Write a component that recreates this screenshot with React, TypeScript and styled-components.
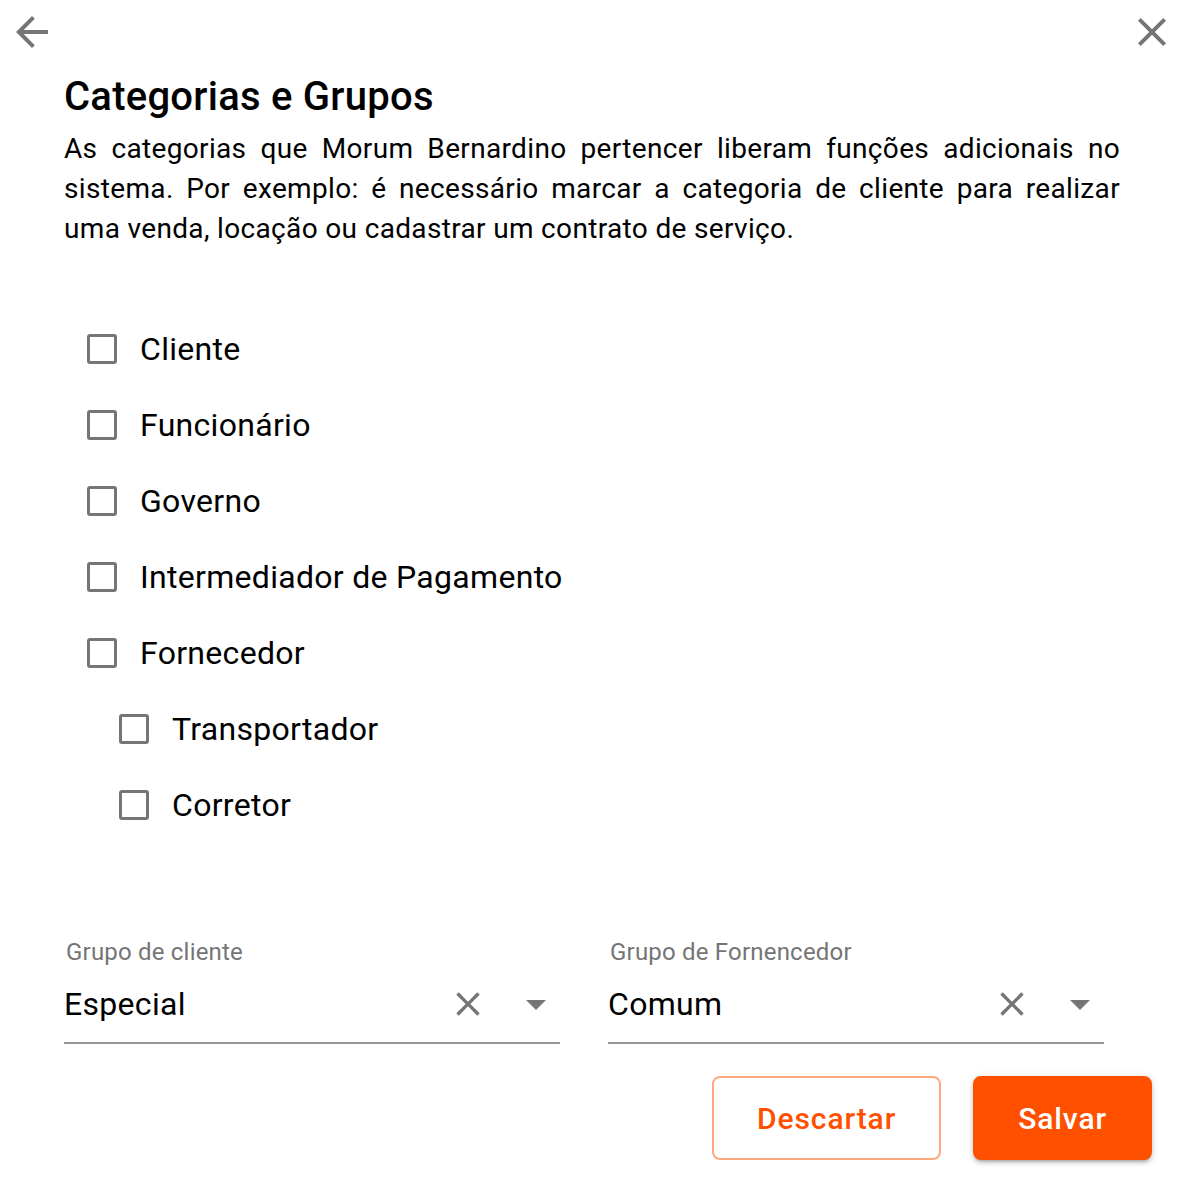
import React, { useState } from 'react';
import styled, { createGlobalStyle } from 'styled-components';

const GlobalStyle = createGlobalStyle`
  html, body {
    margin: 0;
    padding: 0;
    background: #ffffff;
  }
  body {
    font-family: Roboto, "Liberation Sans", Arial, sans-serif;
    color: #000000;
  }
`;

const ORANGE = '#ff5000';

const Page = styled.div`
  width: 1184px;
  min-height: 1192px;
  box-sizing: border-box;
  padding: 0 64px;
`;

const TopBar = styled.div`
  display: flex;
  justify-content: space-between;
  align-items: center;
  height: 64px;
  margin: 0 -56px;
`;

const IconButton = styled.button`
  width: 48px;
  height: 48px;
  padding: 0;
  border: none;
  background: transparent;
  display: flex;
  align-items: center;
  justify-content: center;
  cursor: pointer;
  color: #757575;
`;

const Title = styled.h1`
  margin: 9px 0 0;
  font-size: 40px;
  line-height: 48px;
  font-weight: 500;
  letter-spacing: 0.25px;
  color: #000;
`;

const Description = styled.p`
  margin: 8px 0 0;
  font-size: 28px;
  line-height: 40px;
  text-align: justify;
  color: #000;
  letter-spacing: 0.34px;
`;

const CheckList = styled.div`
  display: flex;
  flex-direction: column;
  margin-top: 62px;
`;

const CheckRow = styled.label<{ $indent?: boolean }>`
  display: flex;
  align-items: center;
  height: 76px;
  padding-left: ${(p) => (p.$indent ? 55 : 23)}px;
  gap: 23px;
  cursor: pointer;
  font-size: 32px;
  letter-spacing: 0.3px;
  color: #000;
`;

const Box = styled.span<{ $checked: boolean }>`
  width: 30px;
  height: 30px;
  box-sizing: border-box;
  border: 3px solid ${(p) => (p.$checked ? ORANGE : '#757575')};
  background: ${(p) => (p.$checked ? ORANGE : 'transparent')};
  border-radius: 3px;
  flex-shrink: 0;
`;

const Fields = styled.div`
  display: grid;
  grid-template-columns: 496px 496px;
  column-gap: 48px;
  margin-top: 93px;
`;

const Field = styled.div`
  display: flex;
  flex-direction: column;
`;

const FieldLabel = styled.span`
  font-size: 24px;
  line-height: 32px;
  letter-spacing: 0.2px;
  color: #757575;
  padding-left: 2px;
`;

const FieldControl = styled.div`
  display: flex;
  align-items: center;
  height: 56px;
  border-bottom: 2px solid #949494;
  padding: 4px 0 10px;
  margin-top: 4px;
`;

const FieldValue = styled.span`
  flex: 1;
  font-size: 32px;
  letter-spacing: 0.3px;
  color: #000;
`;

const FieldIcon = styled.span<{ $gap?: number }>`
  width: 48px;
  height: 48px;
  margin-right: ${(p) => p.$gap ?? 0}px;
  display: flex;
  align-items: center;
  justify-content: center;
  color: #757575;
`;

const Actions = styled.div`
  display: flex;
  justify-content: flex-end;
  gap: 32px;
  margin-top: 32px;
  margin-right: -32px;
`;

const Button = styled.button<{ $primary?: boolean }>`
  height: 84px;
  padding: 0 43px;
  box-sizing: border-box;
  border-radius: 8px;
  font-family: Roboto, "Liberation Sans", Arial, sans-serif;
  font-size: 30px;
  font-weight: 500;
  letter-spacing: 0.9px;
  cursor: pointer;
  border: 2px solid ${(p) => (p.$primary ? ORANGE : '#ffa880')};
  background: ${(p) => (p.$primary ? ORANGE : '#ffffff')};
  color: ${(p) => (p.$primary ? '#ffffff' : ORANGE)};
  box-shadow: ${(p) =>
    p.$primary
      ? '0 3px 3px -2px rgba(0,0,0,0.2), 0 3px 4px 0 rgba(0,0,0,0.14), 0 1px 8px 0 rgba(0,0,0,0.12)'
      : 'none'};
`;

const ArrowBackIcon = () => (
  <svg width="48" height="48" viewBox="0 0 24 24" fill="currentColor">
    <path d="M20 11H7.83l5.59-5.59L12 4l-8 8 8 8 1.41-1.41L7.83 13H20v-2z" />
  </svg>
);

const CloseIcon = ({ size }: { size: number }) => (
  <svg width={size} height={size} viewBox="0 0 24 24" fill="currentColor">
    <path d="M19 6.41L17.59 5 12 10.59 6.41 5 5 6.41 10.59 12 5 17.59 6.41 19 12 13.41 17.59 19 19 17.59 13.41 12z" />
  </svg>
);

const DropDownIcon = () => (
  <svg width="48" height="48" viewBox="0 0 24 24" fill="currentColor">
    <path d="M7 10l5 5 5-5z" />
  </svg>
);

const categories = [
  { name: 'Cliente' },
  { name: 'Funcionário' },
  { name: 'Governo' },
  { name: 'Intermediador de Pagamento' },
  { name: 'Fornecedor' },
  { name: 'Transportador', indent: true },
  { name: 'Corretor', indent: true },
];

const groups = [
  { label: 'Grupo de cliente', value: 'Especial' },
  { label: 'Grupo de Fornencedor', value: 'Comum' },
];

export default function App() {
  const [checked, setChecked] = useState<Record<string, boolean>>({});

  const toggle = (name: string) => {
    setChecked((prev) => ({ ...prev, [name]: !prev[name] }));
  };

  return (
    <Page>
      <GlobalStyle />
      <TopBar>
        <IconButton aria-label="Voltar">
          <ArrowBackIcon />
        </IconButton>
        <IconButton aria-label="Fechar">
          <CloseIcon size={48} />
        </IconButton>
      </TopBar>

      <Title>Categorias e Grupos</Title>
      <Description>
        As categorias que Morum Bernardino pertencer liberam funções adicionais
        no sistema. Por exemplo: é necessário marcar a categoria de cliente
        para realizar uma venda, locação ou cadastrar um contrato de serviço.
      </Description>

      <CheckList>
        {categories.map((c) => (
          <CheckRow
            key={c.name}
            $indent={c.indent}
            onClick={() => toggle(c.name)}
          >
            <Box $checked={!!checked[c.name]} />
            {c.name}
          </CheckRow>
        ))}
      </CheckList>

      <Fields>
        {groups.map((g) => (
          <Field key={g.label}>
            <FieldLabel>{g.label}</FieldLabel>
            <FieldControl>
              <FieldValue>{g.value}</FieldValue>
              <FieldIcon $gap={20}>
                <CloseIcon size={40} />
              </FieldIcon>
              <FieldIcon>
                <DropDownIcon />
              </FieldIcon>
            </FieldControl>
          </Field>
        ))}
      </Fields>

      <Actions>
        <Button>Descartar</Button>
        <Button $primary>Salvar</Button>
      </Actions>
    </Page>
  );
}
